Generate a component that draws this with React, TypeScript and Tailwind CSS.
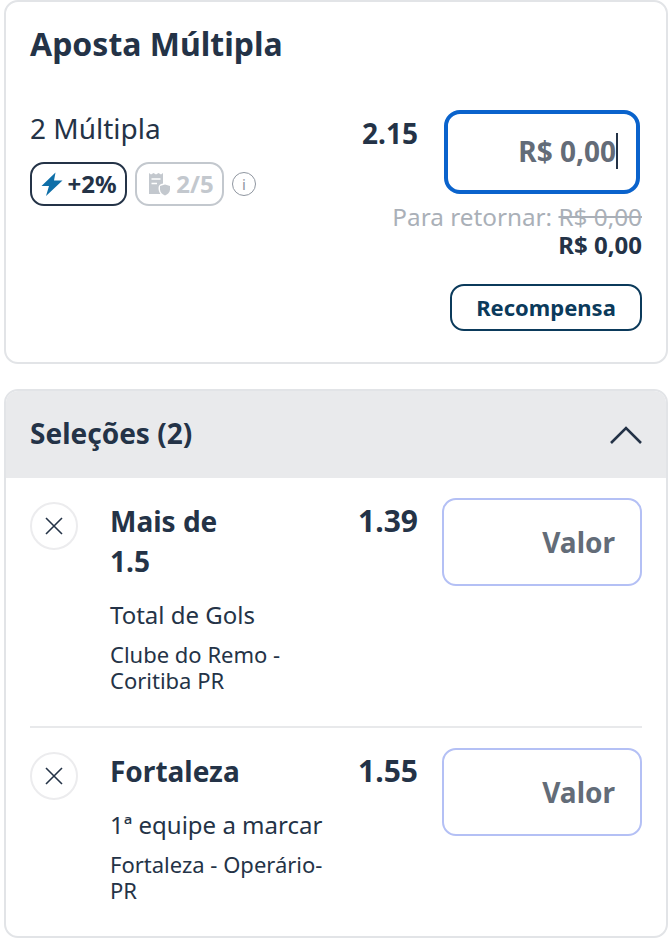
import React from "react";

const ink = "text-[#243347]";

function Bolt() {
  return (
    <svg width="22" height="24" viewBox="0 0 22 24" className="shrink-0">
      <path d="M14.5 0.5 L0.5 14 H8 L5 24 L21.5 8.5 H13 Z" fill="#0f6fa8" />
    </svg>
  );
}

function Slip() {
  return (
    <svg width="22" height="24" viewBox="0 0 22 24" className="shrink-0">
      <path d="M1 1 L3 2.5 L5.5 1 L8 2.5 L10.5 1 L13 2.5 L15 1 V11.5 C12 12 10.5 13.5 10.5 16 C10.5 18 11 20 12.5 22 H1 Z" fill="#c3c8ce" />
      <path d="M3.5 7 H12.5 M3.5 11.5 H9" stroke="#fff" strokeWidth="1.5" />
      <path d="M17 12.5 L22 14 V17.5 C22 20.5 19.5 22.5 17 23.5 C14.5 22.5 12 20.5 12 17.5 V14 Z" fill="#c3c8ce" />
    </svg>
  );
}

function Close() {
  return (
    <div className="flex h-12 w-12 shrink-0 items-center justify-center rounded-full border-2 border-[#ececee] bg-white">
      <svg width="18" height="18" viewBox="0 0 18 18" fill="none" stroke="#243347" strokeWidth="1.6">
        <path d="M1 1 L17 17 M17 1 L1 17" />
      </svg>
    </div>
  );
}

function Selection({ title, market, event, odds, divider }: { title: React.ReactNode; market: string; event: React.ReactNode; odds: string; divider?: boolean }) {
  return (
    <div className={`mx-[24px] flex ${divider ? "border-b-2 border-[#e8e9eb] pb-[33px]" : "pb-[20px]"} pt-[20px]`}>
      <div className="w-[80px] shrink-0 pt-[4px]">
        <Close />
      </div>
      <div className={`w-[226px] shrink-0 pt-[3px] ${ink}`}>
        <div className="text-[28px] font-bold leading-[40px]">{title}</div>
        <div className="mt-[17px] text-[24px] leading-[34px]">{market}</div>
        <div className="mt-[9px] text-[22px] leading-[26px]">{event}</div>
      </div>
      <div className={`w-[82px] shrink-0 pt-[3px] text-right text-[30px] font-bold leading-[40px] ${ink}`}>{odds}</div>
      <div className="ml-[24px] flex h-[88px] w-[200px] shrink-0 items-center justify-end rounded-[14px] border-2 border-[#b4c0f5] pr-[25px] text-[28px] font-bold text-[#636c78]">
        Valor
      </div>
    </div>
  );
}

export default function App() {
  return (
    <div className={`h-[940px] w-[672px] overflow-hidden bg-white px-[4px] font-['Noto_Sans',sans-serif] ${ink}`}>
      <section className="h-[364px] rounded-[14px] border-2 border-[#e2e4e7] px-[24px] pt-[20px]">
        <h1 className="text-[32px] font-bold leading-[44px]">Aposta Múltipla</h1>
        <div className="mt-[43px] flex">
          <div className="w-[316px] shrink-0">
            <div className="-mt-[1px] text-[28px] leading-[40px]">2 Múltipla</div>
            <div className="mt-[14px] flex items-center gap-[8px]">
              <div className="flex h-[44px] w-[97px] items-center justify-center gap-[4px] rounded-[14px] border-2 border-[#243347] pl-[1px] text-[24px] font-bold">
                <Bolt />
                <span>+2%</span>
              </div>
              <div className="flex h-[44px] w-[89px] items-center justify-center gap-[6px] rounded-[14px] border-2 border-[#c3c8ce] pl-[3px] text-[24px] font-bold text-[#c3c8ce]">
                <Slip />
                <span>2/5</span>
              </div>
              <div className="flex h-[24px] w-[24px] items-center justify-center rounded-full border border-[#8f96a0] text-[15px] leading-none text-[#8f96a0]">
                i
              </div>
            </div>
          </div>
          <div className="min-w-0 flex-1">
            <div className="flex justify-end pr-[2px] pt-[1px]">
              <div className="mr-[26px] pt-[3px] text-[28px] font-bold leading-[40px]">2.15</div>
              <div className="flex h-[84px] w-[196px] items-center justify-end rounded-[16px] border-[4px] border-[#0a63cc] pb-[2px] pr-[18px] text-[28px] font-bold text-[#636c78]">
                <span className="border-r-2 border-[#243347] leading-[36px]">R$ 0,00</span>
              </div>
            </div>
            <div className="mt-[7px] text-right text-[24.3px] leading-[32px] text-[#aab0b8]">
              Para retornar: <span className="line-through">R$ 0,00</span>
            </div>
            <div className="text-right text-[24px] font-bold leading-[23px]">R$ 0,00</div>
            <div className="mt-[28px] flex justify-end">
              <div className="flex h-[47px] w-[192px] items-center justify-center rounded-[14px] border-2 border-[#0b3a5b] text-[22px] font-bold text-[#0b3a5b]">
                Recompensa
              </div>
            </div>
          </div>
        </div>
      </section>

      <section className="mt-[25px] h-[549px] overflow-hidden rounded-[14px] border-2 border-[#e2e4e7]">
        <div className="flex h-[87px] items-center justify-between bg-[#e9eaec] px-[24px]">
          <span className="pb-[3px] text-[28px] font-bold">Seleções (2)</span>
          <svg width="32" height="20" viewBox="0 0 32 20" fill="none" stroke="#243347" strokeWidth="2.6">
            <path d="M1 18 L16 3 L31 18" />
          </svg>
        </div>
        <Selection title={<>Mais de<br />1.5</>} market="Total de Gols" event={<>Clube do Remo -<br />Coritiba PR</>} odds="1.39" divider />
        <Selection title="Fortaleza" market="1ª equipe a marcar" event={<>Fortaleza - Operário-<br />PR</>} odds="1.55" />
      </section>
    </div>
  );
}
